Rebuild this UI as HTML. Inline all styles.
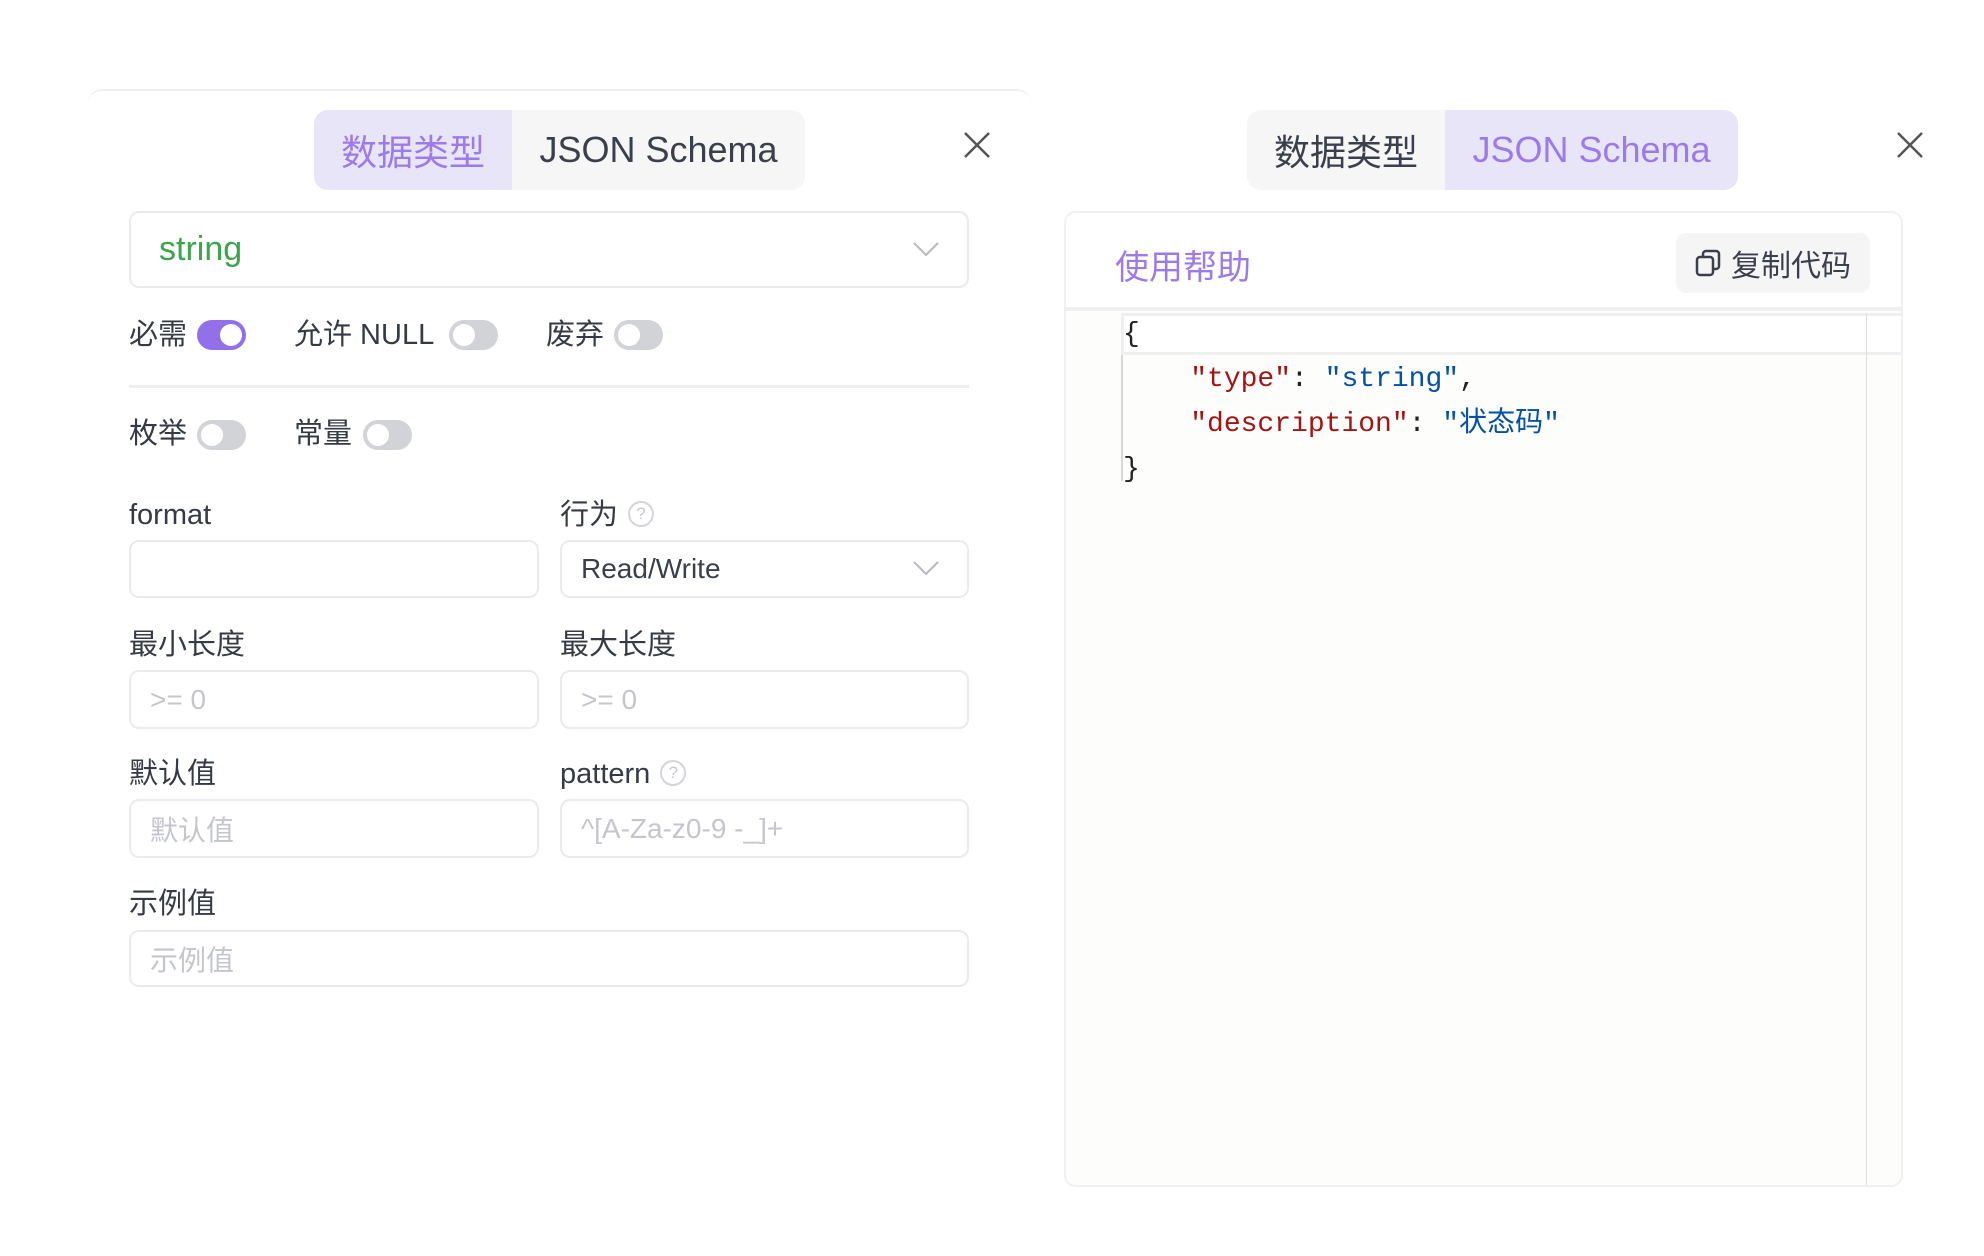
<!DOCTYPE html>
<html><head><meta charset="utf-8"><style>
*{box-sizing:border-box;margin:0;padding:0}
body{width:1984px;height:1256px;background:#fff;position:relative;overflow:hidden;font-family:"Liberation Sans","Noto Sans CJK SC",sans-serif;color:#3a3f4b}
.a{position:absolute}
.panel{border-top:2px solid #f0f0f2;border-radius:14px 14px 0 0}
.tabs{height:80px;border-radius:14px;background:#f6f6f7;display:flex;overflow:hidden;font-size:36px}
.tabs div{display:flex;align-items:center;justify-content:center}
.on{background:#e8e5f8;color:#9b7bea}
.off{color:#3a3f4b}
.inp{border:2px solid #ebebee;border-radius:10px;background:#fff;font-size:28px;padding-left:19px;display:flex;align-items:center}
.ph{color:#c4c6cc}
.lbl{font-size:29px;color:#353a45;height:40px;line-height:40px}
.tg{width:49px;height:30px;border-radius:15px;background:#d2d3d7;position:absolute}
.tg::after{content:"";position:absolute;left:4px;top:4px;width:22px;height:22px;border-radius:50%;background:#fff}
.tg.on2{background:#9270ea}
.tg.on2::after{left:auto;right:4px}
.chev{position:absolute;right:28px;top:50%;width:26px;height:14px;margin-top:-8px}
.q{display:inline-block;width:26px;height:26px;border:2px solid #d3d5da;border-radius:50%;font-size:17px;color:#c8cad0;text-align:center;line-height:22px;vertical-align:middle;margin-left:10px;margin-top:-4px}
.code{font-family:"Liberation Mono","Noto Sans CJK SC",monospace;font-size:28px;white-space:pre;line-height:45px}
.k{color:#a31515}.s{color:#0451a5}
</style></head><body>
<div class="a panel" style="left:88px;top:89px;width:943px;height:1000px"></div>
<div class="a tabs" style="left:314px;top:110px;width:491px"><div class="on" style="width:198px">数据类型</div><div class="off" style="flex:1">JSON Schema</div></div>
<svg class="a" style="left:963px;top:131px" width="28" height="28" viewBox="0 0 28 28"><path d="M2 2L26 26M26 2L2 26" stroke="#555" stroke-width="2.5"/></svg>
<div class="a inp" style="left:129px;top:211px;width:840px;height:77px;font-size:34px;color:#3aa54a;padding-left:28px">string<svg class="chev" viewBox="0 0 26 14"><path d="M1 1L13 13L25 1" fill="none" stroke="#b8bac0" stroke-width="2"/></svg></div>
<div class="a lbl" style="left:129px;top:315px">必需</div><div class="tg on2" style="left:197px;top:320px"></div>
<div class="a lbl" style="left:294px;top:315px">允许 NULL</div><div class="tg" style="left:449px;top:320px"></div>
<div class="a lbl" style="left:546px;top:315px">废弃</div><div class="tg" style="left:614px;top:320px"></div>
<div class="a" style="left:129px;top:385px;width:840px;height:3px;background:#eeeff1"></div>
<div class="a lbl" style="left:129px;top:414px">枚举</div><div class="tg" style="left:197px;top:420px"></div>
<div class="a lbl" style="left:294px;top:414px">常量</div><div class="tg" style="left:363px;top:420px"></div>
<div class="a lbl" style="left:129px;top:495px">format</div>
<div class="a lbl" style="left:560px;top:495px">行为<span class="q">?</span></div>
<div class="a inp" style="left:129px;top:540px;width:410px;height:58px"></div>
<div class="a inp" style="left:560px;top:540px;width:409px;height:58px">Read/Write<svg class="chev" viewBox="0 0 26 14"><path d="M1 1L13 13L25 1" fill="none" stroke="#b8bac0" stroke-width="2"/></svg></div>
<div class="a lbl" style="left:129px;top:625px">最小长度</div>
<div class="a lbl" style="left:560px;top:625px">最大长度</div>
<div class="a inp ph" style="left:129px;top:670px;width:410px;height:59px">&gt;= 0</div>
<div class="a inp ph" style="left:560px;top:670px;width:409px;height:59px">&gt;= 0</div>
<div class="a lbl" style="left:129px;top:754px">默认值</div>
<div class="a lbl" style="left:560px;top:754px">pattern<span class="q">?</span></div>
<div class="a inp ph" style="left:129px;top:799px;width:410px;height:59px">默认值</div>
<div class="a inp ph" style="left:560px;top:799px;width:409px;height:59px">^[A-Za-z0-9 -_]+</div>
<div class="a lbl" style="left:129px;top:884px">示例值</div>
<div class="a inp ph" style="left:129px;top:930px;width:840px;height:57px">示例值</div>

<div class="a tabs" style="left:1247px;top:110px;width:491px"><div class="off" style="width:198px">数据类型</div><div class="on" style="flex:1">JSON Schema</div></div>
<svg class="a" style="left:1896px;top:131px" width="28" height="28" viewBox="0 0 28 28"><path d="M2 2L26 26M26 2L2 26" stroke="#555" stroke-width="2.5"/></svg>
<div class="a" style="left:1064px;top:211px;width:839px;height:976px;border:2px solid #f0f0f2;border-radius:12px;background:#fdfdfc;overflow:hidden">
 <div class="a" style="left:0;top:0;width:100%;height:98px;background:#fff;border-bottom:4px solid #f0f0f1"></div>
 <div class="a" style="left:49px;top:27px;font-size:34px;color:#9b7bea">使用帮助</div>
 <div class="a" style="left:610px;top:20px;width:194px;height:60px;border-radius:10px;background:#f5f5f6;font-size:30px;display:flex;align-items:center;justify-content:center;color:#3a3f4b"><svg width="26" height="28" viewBox="0 0 26 28" style="margin-right:10px"><rect x="2" y="8" width="16" height="18" rx="3" fill="none" stroke="#3a3f4b" stroke-width="2.5"/><path d="M8 8V5a3 3 0 0 1 3-3h10a3 3 0 0 1 3 3v12a3 3 0 0 1-3 3h-3" fill="none" stroke="#3a3f4b" stroke-width="2.5"/></svg>复制代码</div>
 <div class="a" style="left:55px;top:100px;width:784px;height:42px;border:3px solid #efeff0;border-right:none;background:#fff"></div>
 <div class="a" style="left:55px;top:142px;width:2px;height:126px;background:#d8d8d8"></div>
 <div class="a" style="left:800px;top:100px;width:1px;height:880px;background:#dedede"></div>
 <div class="a code" style="left:57px;top:99px;color:#222">{
    <span class="k">"type"</span>: <span class="s">"string"</span>,
    <span class="k">"description"</span>: <span class="s">"状态码"</span>
}</div>
</div>
</body></html>
